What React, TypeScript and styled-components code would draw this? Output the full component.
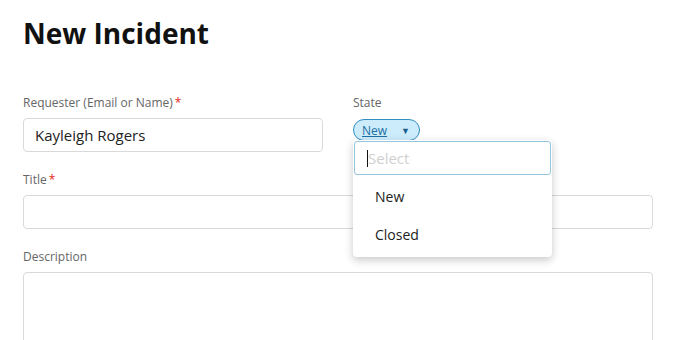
import React, { FC } from 'react';
import styled, { createGlobalStyle } from 'styled-components';

const GlobalStyle = createGlobalStyle`
  body {
    margin: 0;
    background: #fff;
    font-family: "Open Sans", "Noto Sans", sans-serif;
  }
`;

const Page = styled.div`
  width: 694px;
  height: 340px;
  overflow: hidden;
  padding: 14px 41px 0 23px;
  box-sizing: border-box;
`;

const Heading = styled.h1`
  margin: 0;
  font-size: 28px;
  font-weight: 700;
  color: #111;
  line-height: 38px;
`;

const Row = styled.div`
  display: flex;
  gap: 30px;
  margin-top: 43px;
`;

const Field = styled.div<{ $width?: string; $gap?: number }>`
  display: flex;
  flex-direction: column;
  width: ${p => p.$width || '100%'};
  margin-top: ${p => p.$gap || 0}px;
  position: relative;
`;

const Label = styled.label`
  font-size: 12px;
  line-height: 16px;
  color: #666;
  margin-bottom: 7px;
`;

const Star = styled.span`
  color: #e2261c;
  margin-left: 2px;
`;

const TextBox = styled.div<{ $height?: number }>`
  height: ${p => p.$height || 34}px;
  box-sizing: border-box;
  border: 1px solid #d9d9d9;
  border-radius: 4px;
  padding: 0 11px;
  display: flex;
  align-items: center;
  font-size: 15px;
  color: #222;
`;

const Pill = styled.div`
  margin-top: 1px;
  width: 67px;
  height: 22px;
  box-sizing: border-box;
  border: 1px solid #2e8fc4;
  border-radius: 11px;
  background: #cdecfb;
  display: flex;
  align-items: center;
  justify-content: space-between;
  padding: 0 9px 0 8px;
  font-size: 12px;
  color: #1d6fa3;
`;

const PillText = styled.span`
  text-decoration: underline;
`;

const Caret = styled.span`
  font-size: 9px;
  color: #1d5f8c;
`;

const Menu = styled.div`
  position: absolute;
  left: 0;
  top: 45px;
  width: 199px;
  background: #fff;
  border-radius: 4px;
  box-shadow: 0 3px 8px rgba(0, 0, 0, 0.22);
  padding: 1px 1px 4px;
  box-sizing: border-box;
  z-index: 2;
`;

const Search = styled.div`
  height: 34px;
  box-sizing: border-box;
  border: 1px solid #93c6de;
  border-radius: 3px;
  display: flex;
  align-items: center;
  padding-left: 12px;
  margin-bottom: 2px;
  font-size: 15px;
  color: #d0d0d0;
`;

const Cursor = styled.span`
  width: 1px;
  height: 17px;
  background: #111;
`;

const Option = styled.div`
  height: 38px;
  display: flex;
  align-items: center;
  padding-left: 21px;
  font-size: 14px;
  color: #222;
`;

const App: FC = () => {
  return (
    <Page>
      <GlobalStyle />
      <Heading>New Incident</Heading>
      <Row>
        <Field $width="300px">
          <Label>Requester (Email or Name)<Star>*</Star></Label>
          <TextBox>Kayleigh Rogers</TextBox>
        </Field>
        <Field $width="200px">
          <Label>State</Label>
          <Pill>
            <PillText>New</PillText>
            <Caret>▼</Caret>
          </Pill>
          <Menu>
            <Search>
              <Cursor />
              Select
            </Search>
            <Option>New</Option>
            <Option>Closed</Option>
          </Menu>
        </Field>
      </Row>
      <Field $gap={20}>
        <Label>Title<Star>*</Star></Label>
        <TextBox />
      </Field>
      <Field $gap={20}>
        <Label>Description</Label>
        <TextBox $height={120} />
      </Field>
    </Page>
  );
};

export default App;
